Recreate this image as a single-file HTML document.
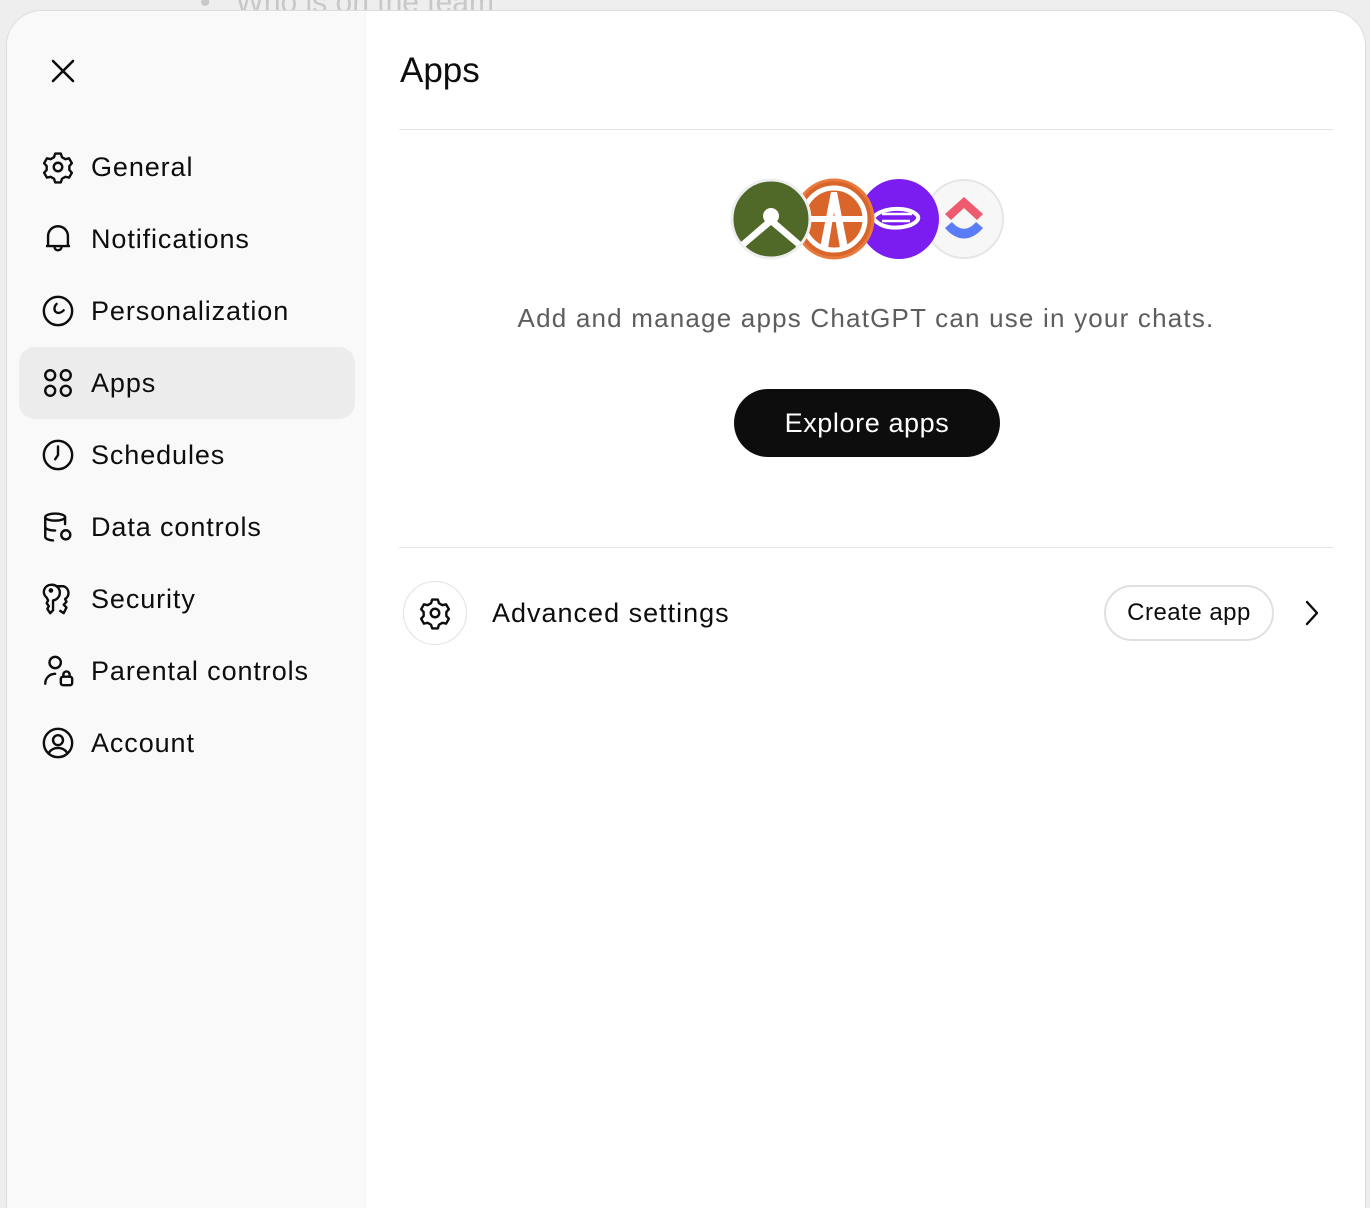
<!DOCTYPE html>
<html><head><meta charset="utf-8"><style>
*{box-sizing:border-box;margin:0;padding:0}
html,body{width:1370px;height:1208px;overflow:hidden}
body{background:#eeeeee;font-family:"Liberation Sans",sans-serif;color:#0d0d0d;position:relative}
.bg{position:absolute;left:200px;top:-14px;font-size:30px;color:#c8c8c8}
.modal{position:absolute;left:6px;top:10px;width:1360px;height:1230px;background:#fff;border-radius:36px;overflow:hidden;border:1px solid #ddd}
.side{position:absolute;left:0;top:0;width:360px;height:100%;background:#f9f9f9}
.close{position:absolute;left:40px;top:44px}
.item{position:absolute;left:12px;width:336px;height:72px;border-radius:16px;display:flex;align-items:center;font-size:27px;letter-spacing:0.9px}
.item.sel{background:#ececec}
.item svg{position:absolute;left:22px;top:19px}
.item span{position:absolute;left:72px}
.main{position:absolute;left:392px;top:0;right:32px}
h1{position:absolute;left:1px;top:40px;font-size:35px;font-weight:400}
.hr{position:absolute;left:0;right:0;height:1px;background:#e5e5e5}
.desc{position:absolute;left:0;right:0;top:292px;text-align:center;font-size:26px;color:#5d5d5d;letter-spacing:1.2px}
.explore{position:absolute;left:335px;top:378px;width:266px;height:68px;border-radius:34px;background:#0d0d0d;color:#fff;font-size:27px;letter-spacing:0.6px;display:flex;align-items:center;justify-content:center}
.gear{position:absolute;left:4px;top:570px;width:64px;height:64px;border-radius:50%;border:1px solid #e2e2e2;display:flex;align-items:center;justify-content:center}
.adv{position:absolute;left:93px;top:587px;font-size:27px;letter-spacing:1px}
.create{position:absolute;left:705px;top:574px;width:170px;height:56px;border-radius:28px;border:2px solid #e0e0e0;font-size:24px;letter-spacing:0.5px;display:flex;align-items:center;justify-content:center}
.chev{position:absolute;left:900px;top:588px}
</style></head><body>
<div class="bg">•&nbsp;&nbsp;&nbsp;Who is on the team</div>
<div class="modal">
<div class="side">
<svg class="close" width="32" height="32" viewBox="0 0 32 32" fill="none" stroke="#0d0d0d" stroke-width="2.6" stroke-linecap="round"><path d="M6 6L26 26M26 6L6 26"/></svg>

<div class="item" style="top:120px"><svg width="34" height="34" viewBox="0 0 24 24" fill="none" stroke="#0d0d0d" stroke-width="1.7" stroke-linejoin="round"><path d="M10 2.5h4l.8 2.6 2.4 1.4 2.6-.6 2 3.4-1.8 2v2.8l1.8 2-2 3.4-2.6-.6-2.4 1.4-.8 2.6h-4l-.8-2.6-2.4-1.4-2.6.6-2-3.4 1.8-2v-2.8l-1.8-2 2-3.4 2.6.6 2.4-1.4z"/><circle cx="12" cy="12" r="3"/></svg><span>General</span></div>

<div class="item" style="top:192px"><svg width="34" height="34" viewBox="0 0 24 24" fill="none" stroke="#0d0d0d" stroke-width="1.7" stroke-linejoin="round"><path d="M5 17V10a7 7 0 0114 0v7H5z M3.5 17h17M9.5 17.5a2.5 2.5 0 005 0"/></svg><span>Notifications</span></div>

<div class="item" style="top:264px"><svg width="34" height="34" viewBox="0 0 24 24" fill="none" stroke="#0d0d0d" stroke-width="1.7" stroke-linecap="round"><circle cx="12" cy="12" r="10"/><path d="M11 7c-2 2-2 5 0 6 1.5.8 3.5 0 5-1.5"/></svg><span>Personalization</span></div>

<div class="item sel" style="top:336px"><svg width="34" height="34" viewBox="0 0 24 24" fill="none" stroke="#0d0d0d" stroke-width="1.7"><circle cx="6.5" cy="6.5" r="3.5"/><circle cx="17.5" cy="6.5" r="3.5"/><circle cx="6.5" cy="17.5" r="3.5"/><circle cx="17.5" cy="17.5" r="3.5"/></svg><span>Apps</span></div>

<div class="item" style="top:408px"><svg width="34" height="34" viewBox="0 0 24 24" fill="none" stroke="#0d0d0d" stroke-width="1.7" stroke-linecap="round"><circle cx="12" cy="12" r="10"/><path d="M12 6v6l-2 3"/></svg><span>Schedules</span></div>

<div class="item" style="top:480px"><svg width="34" height="34" viewBox="0 0 24 24" fill="none" stroke="#0d0d0d" stroke-width="1.7" stroke-linecap="round"><ellipse cx="10" cy="5" rx="7" ry="2.5"/><path d="M3 5v14c0 1.3 2.5 2.3 5.5 2.5M17 5v5M3 12c0 1.3 3 2.5 7 2.5"/><circle cx="17.5" cy="17.5" r="3.2"/></svg><span>Data controls</span></div>

<div class="item" style="top:552px"><svg width="34" height="34" viewBox="0 0 24 24" fill="none" stroke="#0d0d0d" stroke-width="1.7" stroke-linejoin="round"><path d="M7 2a5 5 0 00-3 9l1 2-1 2 1.5 2-1 2 2 3 2-2v-7a5 5 0 00-1.5-11z"/><circle cx="7" cy="6" r=".8" fill="#0d0d0d"/><path d="M11 3h5a5 5 0 011 9l1 2-2 2 2 2-2 4-3-2"/></svg><span>Security</span></div>

<div class="item" style="top:624px"><svg width="34" height="34" viewBox="0 0 24 24" fill="none" stroke="#0d0d0d" stroke-width="1.7" stroke-linecap="round"><circle cx="10" cy="6" r="4"/><path d="M3 21c0-4 3-7 7-7"/><rect x="14" y="16" width="8" height="6" rx="1.5"/><path d="M15.8 16v-1.5a2.2 2.2 0 014.4 0V16"/></svg><span>Parental controls</span></div>

<div class="item" style="top:696px"><svg width="34" height="34" viewBox="0 0 24 24" fill="none" stroke="#0d0d0d" stroke-width="1.7"><circle cx="12" cy="12" r="10"/><circle cx="12" cy="10" r="3.5"/><path d="M5.5 19c1.5-2.5 4-3.5 6.5-3.5s5 1 6.5 3.5"/></svg><span>Account</span></div>
</div>

<div class="main">
<h1>Apps</h1>
<div class="hr" style="top:118px"></div>
<svg style="position:absolute;left:328px;top:165px" width="280" height="86" viewBox="0 0 280 86">
<circle cx="237" cy="43" r="39" fill="#f7f7f7" stroke="#e5e5e5" stroke-width="2"/>
<path d="M218 38l19-17 19 17-6 6-13-12-13 12z" fill="#ee5a6f"/>
<path d="M218 52l7-6c8 9 16 9 24 0l7 6c-12 14-26 14-38 0z" fill="#5a7cf4"/>
<circle cx="172" cy="43" r="40" fill="#7b1cf0"/>
<path d="M146 42c6-10 34-13 44-3 4 4-2 10-14 12-14 2-24-1-30-9z" fill="none" stroke="#fff" stroke-width="4"/>
<path d="M146 36l-6 5 6 4M155 38h30M155 45h28" stroke="#fff" stroke-width="2.5" fill="none"/>
<circle cx="107" cy="43" r="39" fill="#d9652b" stroke="#e87a3d" stroke-width="3"/>
<circle cx="107" cy="43" r="31" fill="none" stroke="#fff" stroke-width="5"/>
<path d="M93 72l11-56h6l11 56h-8l-6-36-6 36z" fill="#fff"/>
<rect x="78" y="40" width="58" height="6" fill="#fff"/>
<circle cx="44" cy="43" r="39" fill="#516928" stroke="#eee" stroke-width="3"/>
<circle cx="44" cy="40" r="8" fill="#fff"/>
<path d="M14 66l30-26 30 26-4 5-26-22-26 22z" fill="#fff"/>
</svg>
<div class="desc">Add and manage apps ChatGPT can use in your chats.</div>
<div class="explore">Explore apps</div>
<div class="hr" style="top:536px"></div>
<div class="gear"><svg width="34" height="34" viewBox="0 0 24 24" fill="none" stroke="#0d0d0d" stroke-width="1.7" stroke-linejoin="round"><path d="M10 2.5h4l.8 2.6 2.4 1.4 2.6-.6 2 3.4-1.8 2v2.8l1.8 2-2 3.4-2.6-.6-2.4 1.4-.8 2.6h-4l-.8-2.6-2.4-1.4-2.6.6-2-3.4 1.8-2v-2.8l-1.8-2 2-3.4 2.6.6 2.4-1.4z"/><circle cx="12" cy="12" r="3"/></svg></div>
<div class="adv">Advanced settings</div>
<div class="create">Create app</div>
<svg class="chev" width="24" height="28" viewBox="0 0 24 28" fill="none" stroke="#0d0d0d" stroke-width="2.4" stroke-linecap="round" stroke-linejoin="round"><path d="M8 3l10 11-10 11"/></svg>
</div>
</div>
</body></html>
